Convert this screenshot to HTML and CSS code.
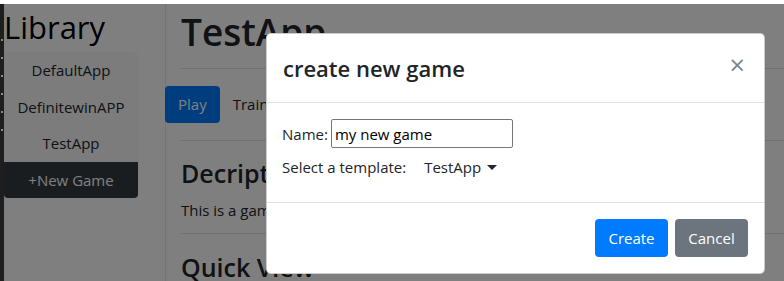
FILE: index.html
```html
<!DOCTYPE html>
<html lang="en">
<head>
    <meta charset="UTF-8">
    <title>Library</title>
    <link rel="stylesheet" href="styles.css">
</head>
<body>

    <div class="topbar"></div>

    <div class="screen">
        <div class="edge"><div class="edge-dots"></div></div>

        <div class="app">
            <!-- Liste des jeux -->
            <aside class="sidebar">
                <h2 class="lib-title">Library</h2>
                <ul class="game-list">
                    <li>DefaultApp</li>
                    <li>DefinitewinAPP</li>
                    <li>TestApp</li>
                    <li class="new-game">+New Game</li>
                </ul>
            </aside>

            <!-- Détail du jeu -->
            <main class="content">
                <h1>TestApp</h1>
                <hr class="hr-title">
                <nav class="tabs">
                    <span class="tab active">Play</span>
                    <span class="tab">Train</span>
                </nav>
                <hr class="hr-tabs">
                <h3>Decription</h3>
                <p>This is a game</p>
                <hr class="hr-desc">
                <h3>Quick View</h3>
            </main>

            <div class="backdrop"></div>

            <!-- Fenêtre de création -->
            <div class="modal">
                <div class="modal-header">
                    <h5>create new game</h5>
                    <span class="close">&times;</span>
                </div>
                <div class="modal-body">
                    <div class="row">
                        <label for="gameName">Name:</label>
                        <input id="gameName" type="text" value="my new game">
                    </div>
                    <div class="row">
                        <span>Select a template:</span>
                        <span class="dropdown">TestApp <span class="caret"></span></span>
                    </div>
                </div>
                <div class="modal-footer">
                    <button class="btn btn-primary">Create</button>
                    <button class="btn btn-secondary">Cancel</button>
                </div>
            </div>
        </div>
    </div>

</body>
</html>
```

FILE: styles.css
```css
/* Base */
body {
    margin: 0;
    font-family: "Open Sans", "Noto Sans", sans-serif;
    font-size: 15px;
    color: #212529;
    background-color: #ffffff;
    overflow: hidden;
    height: 281px;
}

.topbar {
    height: 4px;
    background-color: #ffffff;
}

.screen {
    display: flex;
    height: 277px;
}

.edge {
    width: 4px;
    background-color: #1e1e1e;
    padding-top: 35px;
    box-sizing: border-box;
}

.edge-dots {
    width: 2px;
    height: 95px;
    margin-left: 1px;
    background: repeating-linear-gradient(to bottom, #8a8a8a 0, #8a8a8a 2px, transparent 2px, transparent 18px);
}

.app {
    position: relative;
    flex: 1;
    display: flex;
    background-color: #ffffff;
}

/* Colonne de gauche */
.sidebar {
    width: 161px;
    border-right: 1px solid #e4e6e8;
}

.lib-title {
    margin: 0;
    font-size: 31px;
    font-weight: 400;
    line-height: 46px;
    color: #000000;
}

.game-list {
    list-style: none;
    margin: 2px 0 0;
    padding: 0;
    width: 134px;
    background-color: #f8f9fa;
    border-radius: 4px;
}

.game-list li {
    text-align: center;
    line-height: 24.5px;
    padding: 6px 0;
}

.game-list .new-game {
    background-color: #343a40;
    color: #ffffff;
    border-radius: 0 0 4px 4px;
}

/* Contenu principal */
.content {
    flex: 1;
    padding: 0 0 0 15px;
}

.content h1 {
    margin: 4px 0 0;
    font-size: 37px;
    font-weight: 600;
    line-height: 48px;
}

.content hr {
    margin: 0;
    border: 0;
    border-top: 1px solid #dee2e6;
}

.hr-title {
    margin-top: 12px !important;
    margin-bottom: 17px !important;
}

.hr-tabs {
    margin-top: 17px !important;
    margin-bottom: 14px !important;
}

.hr-desc {
    margin-top: 11px !important;
    margin-bottom: 15px !important;
}

.content h3 {
    margin: 0;
    font-size: 25px;
    font-weight: 600;
    line-height: 36px;
}

.content p {
    margin: 7px 0 0;
    line-height: 24px;
}

.tabs {
    display: flex;
    margin-left: -16px;
}

.tab {
    height: 37px;
    box-sizing: border-box;
    padding: 6px 13px;
    line-height: 25px;
    border-radius: 4px;
}

.tab.active {
    background-color: #007bff;
    color: #ffffff;
}

/* Fond assombri */
.backdrop {
    position: absolute;
    top: 0;
    left: 0;
    right: 0;
    bottom: 0;
    background-color: rgba(0, 0, 0, 0.5);
}

/* Fenêtre */
.modal {
    position: absolute;
    top: 29px;
    left: 262px;
    width: 497px;
    background-color: #ffffff;
    border: 1px solid rgba(0, 0, 0, 0.2);
    border-radius: 5px;
}

.modal-header {
    display: flex;
    align-items: center;
    justify-content: space-between;
    padding: 16px;
    border-bottom: 1px solid #dee2e6;
}

.modal-header h5 {
    margin: 0;
    font-size: 22px;
    font-weight: 600;
    line-height: 36px;
}

.close {
    font-size: 27px;
    font-weight: 400;
    color: #2a3540;
    opacity: 0.6;
    line-height: 24px;
    margin: 0 3px 7px 0;
}

.modal-body {
    padding: 16px 15px;
}

.row {
    display: flex;
    align-items: center;
}

.row label {
    margin-right: 3px;
}

.row input {
    font-family: inherit;
    font-size: 15px;
    width: 182px;
    height: 29px;
    box-sizing: border-box;
    padding: 0 3px;
    border: 1px solid #767676;
    border-radius: 2px;
    color: #000000;
}

.dropdown {
    padding: 6px 12px;
    margin-left: 6px;
    line-height: 26px;
}

.caret {
    display: inline-block;
    vertical-align: 3px;
    margin-left: 2px;
    border-top: 5px solid #212529;
    border-left: 5px solid transparent;
    border-right: 5px solid transparent;
}

.modal-footer {
    display: flex;
    justify-content: flex-end;
    gap: 7px;
    padding: 16px;
    border-top: 1px solid #dee2e6;
}

.btn {
    font-family: inherit;
    font-size: 15px;
    width: 73px;
    height: 38px;
    border: none;
    border-radius: 4px;
    color: #ffffff;
}

.btn-primary {
    background-color: #007bff;
}

.btn-secondary {
    background-color: #6c757d;
}
```
